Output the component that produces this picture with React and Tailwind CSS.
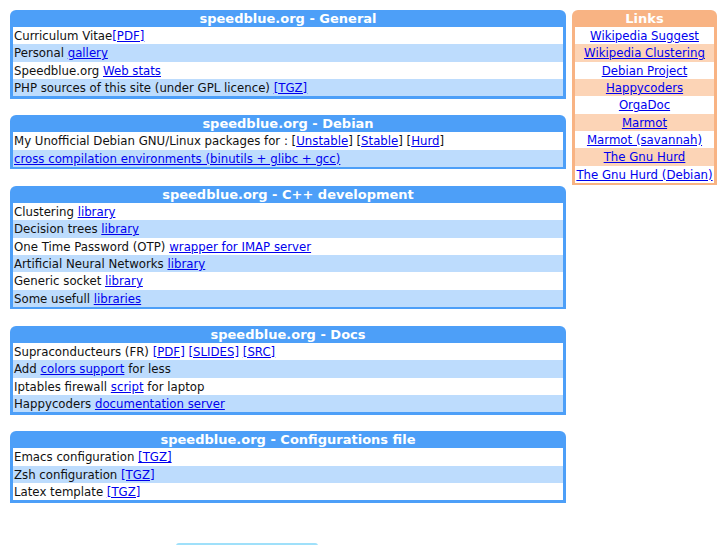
import React from "react";

const L = ({ children }) => (
  <a href="#" className="text-[#0000ee] underline">{children}</a>
);

const sections = [
  {
    title: "speedblue.org - General",
    rows: [
      <>Curriculum Vitae<L>[PDF]</L></>,
      <>Personal <L>gallery</L></>,
      <>Speedblue.org <L>Web stats</L></>,
      <>PHP sources of this site (under GPL licence) <L>[TGZ]</L></>,
    ],
  },
  {
    title: "speedblue.org - Debian",
    rows: [
      <>My Unofficial Debian GNU/Linux packages for : [<L>Unstable</L>] [<L>Stable</L>] [<L>Hurd</L>]</>,
      <><L>cross compilation environments (binutils + glibc + gcc)</L></>,
    ],
  },
  {
    title: "speedblue.org - C++ development",
    rows: [
      <>Clustering <L>library</L></>,
      <>Decision trees <L>library</L></>,
      <>One Time Password (OTP) <L>wrapper for IMAP server</L></>,
      <>Artificial Neural Networks <L>library</L></>,
      <>Generic socket <L>library</L></>,
      <>Some usefull <L>libraries</L></>,
    ],
  },
  {
    title: "speedblue.org - Docs",
    rows: [
      <>Supraconducteurs (FR) <L>[PDF]</L> <L>[SLIDES]</L> <L>[SRC]</L></>,
      <>Add <L>colors support</L> for less</>,
      <>Iptables firewall <L>script</L> for laptop</>,
      <>Happycoders <L>documentation server</L></>,
    ],
  },
  {
    title: "speedblue.org - Configurations file",
    rows: [
      <>Emacs configuration <L>[TGZ]</L></>,
      <>Zsh configuration <L>[TGZ]</L></>,
      <>Latex template <L>[TGZ]</L></>,
    ],
  },
];

const links = [
  "Wikipedia Suggest",
  "Wikipedia Clustering",
  "Debian Project",
  "Happycoders",
  "OrgaDoc",
  "Marmot",
  "Marmot (savannah)",
  "The Gnu Hurd",
  "The Gnu Hurd (Debian)",
];

function Box({ title, rows }) {
  return (
    <div className="rounded-t-[6px] bg-[#4d9ff8] px-[3px] pb-[2.5px]">
      <div className="h-[17px] text-center text-[13px] font-bold leading-[17px] text-white">
        {title}
      </div>
      {rows.map((r, i) => (
        <div
          key={i}
          className={
            "h-[17.33px] whitespace-nowrap pl-[1px] pt-[1px] leading-[16.33px] text-[#111] " +
            (i % 2 === 1 ? "bg-[#bddcfd]" : "bg-white")
          }
        >
          {r}
        </div>
      ))}
    </div>
  );
}

export default function App() {
  return (
    <div
      className="min-h-[545px] bg-white text-[11.75px]"
      style={{ fontFamily: '"DejaVu Sans", Verdana, sans-serif' }}
    >
      <div className="flex items-start gap-[6px] pl-[10px] pt-[10px]">
        <div className="flex w-[556px] flex-col gap-[16.5px]">
          {sections.map((s) => (
            <Box key={s.title} title={s.title} rows={s.rows} />
          ))}
          <div className="ml-[166px] mt-[24px] h-[3px] w-[142px] rounded-t-[3px] bg-[#9fe0fa]" />
        </div>
        <div className="w-[145px] rounded-t-[6px] bg-[#f8b383] px-[3px] pb-[2.5px]">
          <div className="h-[17px] text-center text-[13px] font-bold leading-[17px] text-white">
            Links
          </div>
          {links.map((l, i) => (
            <div
              key={l}
              className={
                "h-[17.33px] whitespace-nowrap pt-[1px] text-center leading-[16.33px] " +
                (i % 2 === 1 ? "bg-[#fcd4b6]" : "bg-white")
              }
            >
              <L>{l}</L>
            </div>
          ))}
        </div>
      </div>
    </div>
  );
}
